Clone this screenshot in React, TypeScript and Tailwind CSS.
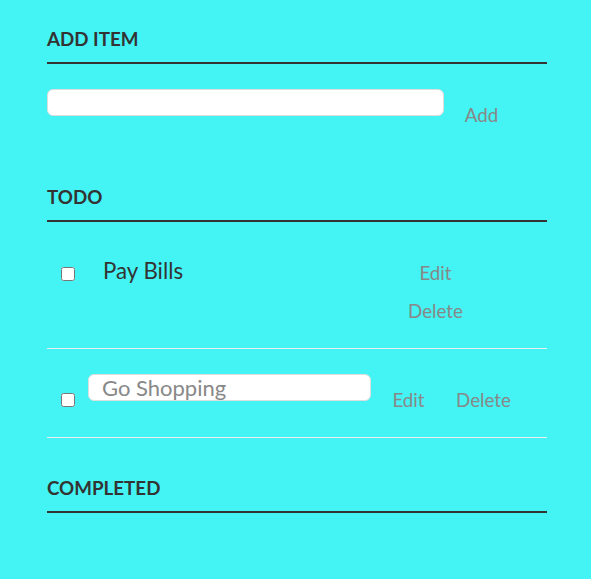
import React from 'react';

const btn = 'block w-[75px] text-center text-[18.75px] leading-[25px] text-[#888] hover:text-[#333] cursor-pointer';

const Heading: React.FC<{ children: React.ReactNode; className?: string }> = ({ children, className }) => (
  <h3
    className={`pb-[12px] border-b-2 border-[#333] text-[18.75px] leading-[23px] font-bold uppercase text-[#333] ${className ?? ''}`}
  >
    {children}
  </h3>
);

export default function App() {
  return (
    <div className="min-h-screen bg-[#44f3f3] font-['Lato',sans-serif] text-[#333]">
      <div className="ml-[47px] w-[500px]">
        {/* New task */}
        <Heading className="pt-[27px]">Add item</Heading>
        <div className="mt-[25px] flex items-start">
          <input
            type="text"
            className="w-[397px] h-[27px] px-[13px] bg-white border border-[#ddd] rounded-[6px] text-[22px] text-[#888] outline-none"
          />
          <button className={`${btn} mt-[13px]`}>Add</button>
        </div>

        {/* Todo */}
        <Heading className="mt-[20px] pt-[38px]">Todo</Heading>
        <ul>
          <li className="flex items-start pt-[25px] pb-[25px] border-b border-[#eee]">
            <input type="checkbox" className="mt-[19.5px] ml-[14px] w-[14px] h-[14px] shrink-0" />
            <label className="ml-[11px] w-[312px] pl-[17px] text-[22.25px] leading-[48px]">Pay Bills</label>
            <div className="flex flex-col">
              <button className={`${btn} mt-[13px]`}>Edit</button>
              <button className={`${btn} mt-[12.5px]`}>Delete</button>
            </div>
          </li>
          <li className="flex items-start py-[25px] border-b border-[#eee]">
            <input type="checkbox" className="mt-[19px] ml-[14px] w-[14px] h-[14px] shrink-0" />
            <input
              type="text"
              defaultValue="Go Shopping"
              className="ml-[13px] w-[283px] h-[27px] px-[13px] bg-white border border-[#ddd] rounded-[6px] text-[22px] text-[#888] outline-none"
            />
            <button className={`${btn} mt-[13px]`}>Edit</button>
            <button className={`${btn} mt-[13px]`}>Delete</button>
          </li>
        </ul>

        {/* Completed */}
        <Heading className="pt-[38px]">Completed</Heading>
        <ul></ul>
      </div>
    </div>
  );
}
